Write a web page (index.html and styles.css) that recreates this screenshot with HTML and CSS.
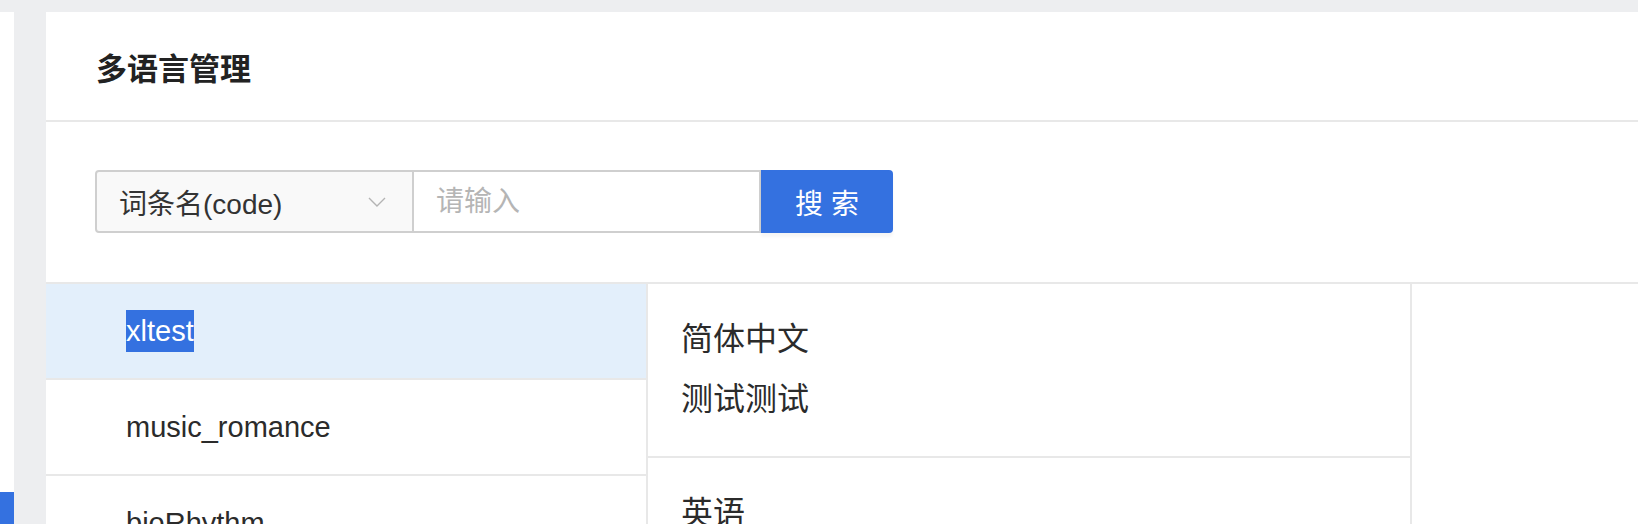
FILE: index.html
```html
<!DOCTYPE html>
<html lang="zh-CN">
<head>
    <meta charset="UTF-8">
    <meta name="viewport" content="width=device-width, initial-scale=1.0">
    <title>多语言管理</title>
    <link rel="stylesheet" href="styles.css">
</head>
<body>
    <div class="app">
        <div class="sidebar">
            <div class="nav-item"></div>
        </div>
        <div class="main">
            <div class="page-header">
                <h1>多语言管理</h1>
            </div>

            <div class="search-bar">
                <div class="field-select">
                    <span>词条名(code)</span>
                    <svg width="18" height="10" viewBox="0 0 18 10">
                        <polyline points="1,1 9,9 17,1" fill="none" stroke="#b4b4b4" stroke-width="1.4"/>
                    </svg>
                </div>
                <input class="field-input" type="text" placeholder="请输入">
                <button class="btn-search" type="button">搜 索</button>
            </div>

            <div class="dict">
                <ul class="key-list">
                    <li class="active"><span class="sel">xltest</span></li>
                    <li>music_romance</li>
                    <li>bioRhythm</li>
                </ul>
                <div class="trans-list">
                    <div class="trans-item">
                        <p>简体中文</p>
                        <p>测试测试</p>
                    </div>
                    <div class="trans-item">
                        <p>英语</p>
                    </div>
                </div>
                <div class="detail"></div>
            </div>
        </div>
    </div>
</body>
</html>
```

FILE: styles.css
```css
* { box-sizing: border-box; }
html, body { margin: 0; height: 100%; overflow: hidden; }
body { background: #edeef0; font-family: "Liberation Sans", "Noto Sans CJK SC", sans-serif; color: #333; }

.app { display: flex; height: 100%; padding-top: 12px; }
.sidebar { width: 14px; background: #fff; padding-top: 480px; }
.nav-item { height: 40px; background: #3471e0; }
.main { flex: 1; margin-left: 32px; background: #fff; display: flex; flex-direction: column; overflow: hidden; }

.page-header { flex-shrink: 0; height: 110px; border-bottom: 2px solid #e8e8e8; display: flex; align-items: center; padding-left: 50px; }
.page-header h1 { margin: 0; font-size: 31px; font-weight: bold; color: #222; }

.search-bar { flex-shrink: 0; display: flex; padding: 48px 49px 49px; }
.field-select { width: 319px; height: 63px; border: 2px solid #cfcfcf; border-radius: 4px 0 0 4px; background: #f9f9f9; display: flex; align-items: center; justify-content: space-between; padding: 0 26px 0 22px; font-size: 28px; color: #333; }
.field-input { width: 347px; height: 63px; border: 2px solid #cfcfcf; border-left: 0; padding: 0 22px; font-size: 28px; font-family: inherit; outline: none; }
.field-input::placeholder { color: #b5b5b5; }
.btn-search { width: 132px; height: 63px; border: none; border-radius: 0 4px 4px 0; background: #3471e0; color: #fff; font-size: 28px; font-family: inherit; box-shadow: 0 4px 3px rgba(0, 0, 0, .04); cursor: pointer; }

.dict { flex: 1; display: flex; border-top: 2px solid #e8e8e8; }
.key-list { width: 602px; margin: 0; padding: 0; list-style: none; border-right: 2px solid #e8e8e8; }
.key-list li { height: 96px; border-bottom: 2px solid #e8e8e8; display: flex; align-items: center; padding-left: 80px; font-size: 29px; color: #2b2b2b; }
.key-list li.active { background: #e3effb; }
.sel { display: inline-block; line-height: 42px; background: #3471e0; color: #fff; }

.trans-list { width: 764px; border-right: 2px solid #e8e8e8; }
.trans-item { border-bottom: 2px solid #e8e8e8; padding: 25px 33px 27px; font-size: 32px; color: #2b2b2b; }
.trans-item p { margin: 0; line-height: 60px; }
.detail { flex: 1; }
```
